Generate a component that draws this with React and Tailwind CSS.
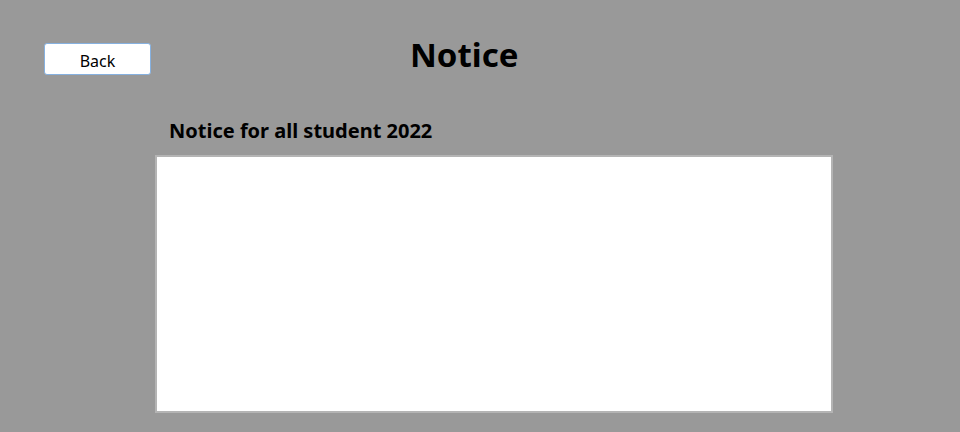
export default function App() {
  return (
    <div className="h-[432px] w-[960px] overflow-hidden bg-[#999999] font-['Noto_Sans',sans-serif] text-black">
      <div className="flex items-start pl-[44px] pt-[43px]">
        <button className="flex h-[32px] w-[107px] items-center justify-center rounded-[3px] border border-[#86b1e0] bg-white pt-[3px] text-[16px] leading-none">
          Back
        </button>
        <h1 className="ml-[259px] mt-[-12px] text-[33px] font-bold leading-[48px]">Notice</h1>
      </div>
      <div className="ml-[155px] mt-[39px] w-[678px]">
        <h2 className="pl-[14px] text-[20px] font-bold leading-[26px]">Notice for all student 2022</h2>
        <div className="mt-[11px] h-[258px] w-full border-2 border-[#b4b4b4] bg-white" />
      </div>
    </div>
  );
}
